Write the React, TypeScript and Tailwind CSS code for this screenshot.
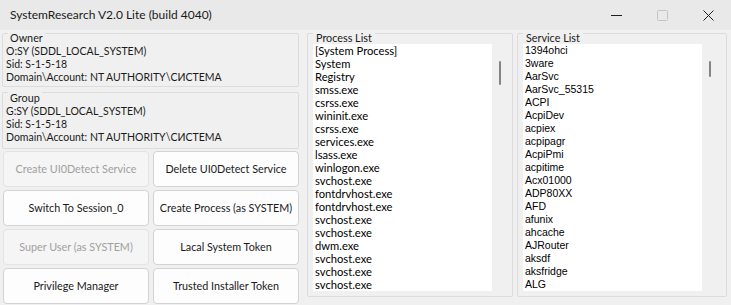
import React from "react";

const processes = [
  "[System Process]", "System", "Registry", "smss.exe", "csrss.exe", "wininit.exe", "csrss.exe",
  "services.exe", "lsass.exe", "winlogon.exe", "svchost.exe", "fontdrvhost.exe", "fontdrvhost.exe",
  "svchost.exe", "svchost.exe", "dwm.exe", "svchost.exe", "svchost.exe", "svchost.exe",
];

const services = [
  "1394ohci", "3ware", "AarSvc", "AarSvc_55315", "ACPI", "AcpiDev", "acpiex", "acpipagr", "AcpiPmi",
  "acpitime", "Acx01000", "ADP80XX", "AFD", "afunix", "ahcache", "AJRouter", "aksdf", "aksfridge", "ALG",
];

const buttons: { label: string; disabled?: boolean }[] = [
  { label: "Create UI0Detect Service", disabled: true },
  { label: "Delete UI0Detect Service" },
  { label: "Switch To Session_0" },
  { label: "Create Process (as SYSTEM)" },
  { label: "Super User (as SYSTEM)", disabled: true },
  { label: "Lacal System Token" },
  { label: "Privilege Manager" },
  { label: "Trusted Installer Token" },
];

function InfoBox({ title, lines, labelClass, className }: { title: string; lines: string[]; labelClass: string; className: string }) {
  return (
    <div className={"border border-[#dcdcdc] rounded-[2px] pl-[3px] text-[10.5px] " + className}>
      <div className={"leading-[13px] " + labelClass}>
        <span className="inline-block bg-[#f0f0f0] ml-[2px] px-[2px] text-[10.8px]">{title}</span>
      </div>
      {lines.map((l, i) => (
        <div key={i} className="leading-[13px] whitespace-nowrap">{l}</div>
      ))}
    </div>
  );
}

function ListGroup({ title, items, widthClass, thumbH, itemFont }: { title: string; items: string[]; widthClass: string; thumbH: string; itemFont: string }) {
  return (
    <div className={"mt-[3px] h-[264px] border border-[#dcdcdc] rounded-[2px] flex flex-col " + widthClass}>
      <div className="-mt-[3px] leading-[13px] pl-[5px] text-[10.8px]">
        <span className="inline-block bg-[#f0f0f0] px-[3px]">{title}</span>
      </div>
      <div className="flex flex-1 pl-[5px] pb-[4px]">
        <div className={"w-[179px] h-[247px] bg-white pl-[2px] overflow-hidden text-black " + itemFont}>
          {items.map((it, i) => (
            <div key={i} className="leading-[13px] h-[13px] whitespace-nowrap">{it}</div>
          ))}
        </div>
        <div className="flex-1">
          <div className={"mt-[17px] ml-[7px] w-[2px] bg-[#858585] rounded-full " + thumbH} />
        </div>
      </div>
    </div>
  );
}

export default function App() {
  return (
    <div className="w-[731px] h-[305px] bg-[#f0f0f0] flex flex-col overflow-hidden text-[12px] text-[#1a1a1a] [font-family:Lato,sans-serif]">
      {/* Title bar */}
      <div className="h-[30px] bg-[#e9e9e9] flex items-center shrink-0">
        <div className="pl-[10px] flex-1 text-[12px] text-[#1a1a1a] whitespace-nowrap">SystemResearch V2.0 Lite (build 4040)</div>
        <div className="w-[46px] h-[30px] flex items-center justify-center">
          <svg width="11" height="11" viewBox="0 0 11 11"><path d="M0 5.5 H11" stroke="#1f1f1f" strokeWidth="1" /></svg>
        </div>
        <div className="w-[46px] h-[30px] flex items-center justify-center">
          <svg width="11" height="11" viewBox="0 0 11 11"><rect x="0.5" y="0.5" width="10" height="10" rx="1" fill="none" stroke="#c4c4c4" strokeWidth="1" /></svg>
        </div>
        <div className="w-[46px] h-[30px] flex items-center justify-center">
          <svg width="11" height="11" viewBox="0 0 11 11"><path d="M0.5 0.5 L10.5 10.5 M10.5 0.5 L0.5 10.5" stroke="#1f1f1f" strokeWidth="1" /></svg>
        </div>
      </div>

      {/* Body */}
      <div className="flex flex-1">
        <div className="w-[297px] ml-[2px] flex flex-col">
          <InfoBox
            className="mt-[3px] pb-[2px]"
            labelClass="-mt-[3px]"
            title="Owner"
            lines={["O:SY (SDDL_LOCAL_SYSTEM)", "Sid: S-1-5-18", "Domain\\Account: NT AUTHORITY\\СИСТЕМА"]}
          />
          <InfoBox
            className="mt-[5px] pb-[4px]"
            labelClass="-mt-[2px]"
            title="Group"
            lines={["G:SY (SDDL_LOCAL_SYSTEM)", "Sid: S-1-5-18", "Domain\\Account: NT AUTHORITY\\СИСТЕМА"]}
          />
          <div className="mt-[2px] grid grid-cols-2 gap-x-[4px] gap-y-[3px] pl-[1px]">
            {buttons.map((b, i) => (
              <div
                key={i}
                className={
                  "h-[36px] rounded-[4px] border flex items-center justify-center whitespace-nowrap text-[10.8px] " +
                  (b.disabled
                    ? "bg-[#f5f5f5] border-[#e3e3e3] text-[#a0a0a0]"
                    : "bg-[#fdfdfd] border-[#d3d3d3] text-[#1a1a1a]")
                }
              >
                {b.label}
              </div>
            ))}
          </div>
        </div>

        <div className="ml-[8px]">
          <ListGroup title="Process List" items={processes} widthClass="w-[206px]" thumbH="h-[24px]" itemFont="text-[11.2px]" />
        </div>
        <div className="ml-[4px]">
          <ListGroup
            title="Service List"
            items={services}
            widthClass="w-[210px]"
            thumbH="h-[16px]"
            itemFont="text-[10.5px] [font-family:'Liberation_Sans',sans-serif]"
          />
        </div>
      </div>
    </div>
  );
}
